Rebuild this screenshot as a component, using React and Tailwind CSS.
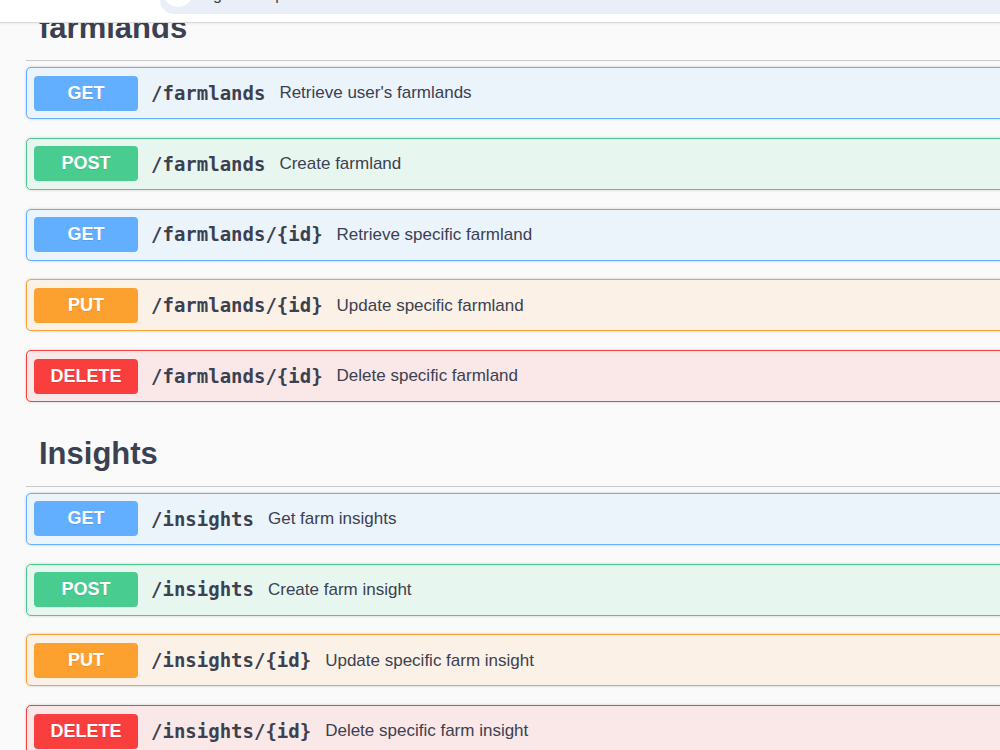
import React from 'react'

const METHOD_STYLES = {
  GET:    { badge: 'bg-[#61affe]', block: 'bg-[#ebf3fb] border-[#61affe]' },
  POST:   { badge: 'bg-[#49cc90]', block: 'bg-[#e8f6f0] border-[#49cc90]' },
  PUT:    { badge: 'bg-[#fca130]', block: 'bg-[#fbf1e6] border-[#fca130]' },
  DELETE: { badge: 'bg-[#f93e3e]', block: 'bg-[#fae7e7] border-[#f93e3e]' },
}

const SECTIONS = [
  {
    tag: 'farmlands',
    ops: [
      { method: 'GET', path: '/farmlands', summary: "Retrieve user's farmlands" },
      { method: 'POST', path: '/farmlands', summary: 'Create farmland' },
      { method: 'GET', path: '/farmlands/{id}', summary: 'Retrieve specific farmland' },
      { method: 'PUT', path: '/farmlands/{id}', summary: 'Update specific farmland' },
      { method: 'DELETE', path: '/farmlands/{id}', summary: 'Delete specific farmland' },
    ],
  },
  {
    tag: 'Insights',
    ops: [
      { method: 'GET', path: '/insights', summary: 'Get farm insights' },
      { method: 'POST', path: '/insights', summary: 'Create farm insight' },
      { method: 'PUT', path: '/insights/{id}', summary: 'Update specific farm insight' },
      { method: 'DELETE', path: '/insights/{id}', summary: 'Delete specific farm insight' },
    ],
  },
]

function OpBlock({ method, path, summary }) {
  const s = METHOD_STYLES[method]
  return (
    <div className={`mb-[18.75px] border rounded-[5px] shadow-[0_0_3px_rgba(0,0,0,0.19)] ${s.block}`}>
      <div className="flex items-center px-[7px] py-[7.5px]">
        <span
          className={`w-[104px] h-[35px] flex items-center justify-center rounded-[4px] text-white font-bold text-[18px] [text-shadow:0_1px_0_rgba(0,0,0,0.1)] ${s.badge}`}
        >
          {method}
        </span>
        <span className="pl-[13px] pr-[14px] text-[19px] font-bold text-[#3b4151] font-['DejaVu_Sans_Mono',monospace]">
          {path}
        </span>
        <span className="text-[17px] text-[#3b4151]">{summary}</span>
      </div>
    </div>
  )
}

export default function App() {
  return (
    <div className="relative h-[750px] w-[1000px] overflow-hidden bg-[#fafafa] font-['Liberation_Sans',Arial,sans-serif]">
      {/* top bar (sticks over the page) */}
      <div className="absolute top-0 left-0 right-0 z-10 h-[23px] bg-white border-b border-[#d9d9d9] shadow-[0_1px_2px_rgba(0,0,0,0.06)]">
        <div className="ml-[160px] h-[14px] bg-[#e9eef8] rounded-bl-[14px] flex items-end overflow-hidden">
          <div className="w-[30px] h-[30px] rounded-full bg-white ml-[3px] mb-[7px] shrink-0" />
          <span className="ml-[20px] text-[16px] leading-[16px] text-[#444] whitespace-nowrap translate-y-[-11px]">
            g&nbsp;&nbsp;&nbsp;&nbsp;&nbsp;&nbsp;&nbsp;&nbsp;&nbsp;&nbsp;&nbsp;&nbsp;p
          </span>
        </div>
      </div>

      <div className="mt-[-5px] ml-[26px] w-[1100px]">
        {SECTIONS.map((sec) => (
          <section key={sec.tag}>
            <h3 className="mb-[6px] border-b border-[#c8c9cc] pl-[13px] pt-[12px] pb-[11px] text-[31px] leading-[42px] font-bold text-[#3b4151]">
              {sec.tag}
            </h3>
            {sec.ops.map((op, j) => (
              <OpBlock key={j} {...op} />
            ))}
          </section>
        ))}
      </div>
    </div>
  )
}
